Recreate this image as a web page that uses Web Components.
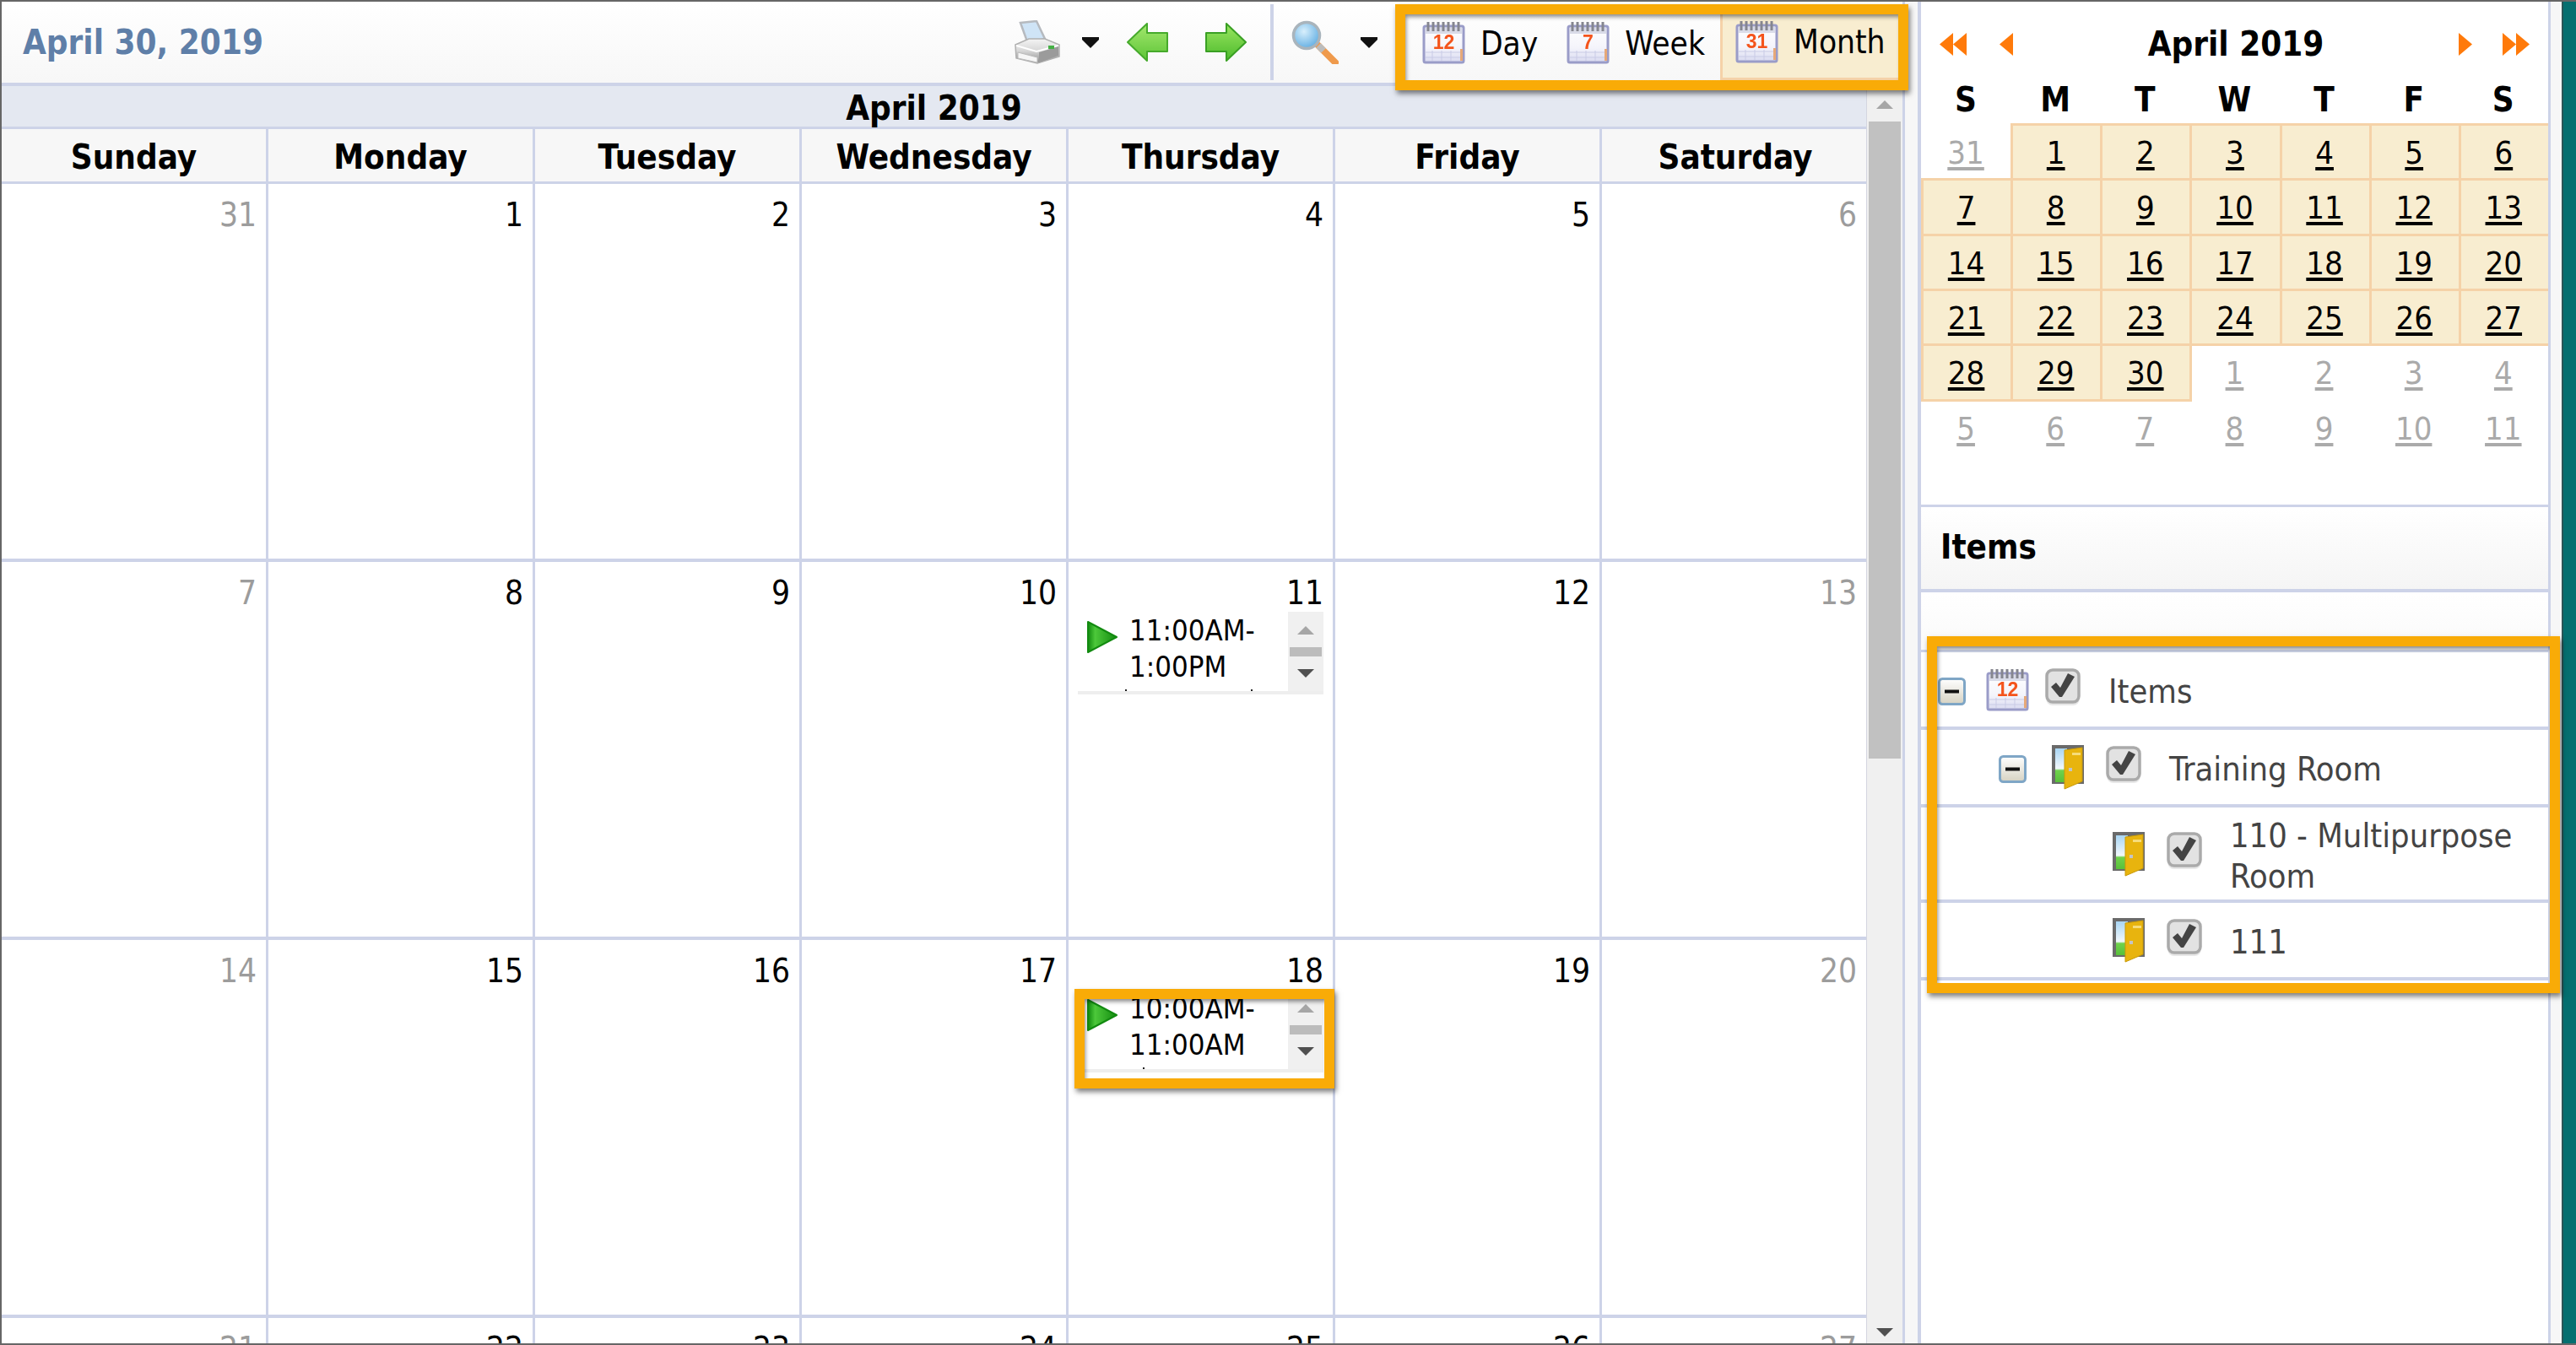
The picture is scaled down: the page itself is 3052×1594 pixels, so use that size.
<!DOCTYPE html>
<html>
<head>
<meta charset="utf-8">
<title>Calendar</title>
<style>
  html, body { margin: 0; padding: 0; background: #fff; overflow: hidden; }
  body { font-family: "DejaVu Sans Condensed", "DejaVu Sans", "Liberation Sans", sans-serif; font-stretch: condensed; font-size: 38px; }
</style>
</head>
<body>
<cal-app></cal-app>

<script>
  (function () {

    // small helper, every element is the same few lines otherwise
    function shadow(el, html) {
      const root = el.attachShadow({ mode: 'open' });
      root.innerHTML = html;
      return root;
    }

    const LINE = '#cdd3e8';

    const calendarIcon = (num) => `
      <svg width="53" height="52" viewBox="0 0 53 52">
        <defs><linearGradient id="pg" x1="0" y1="0" x2="0" y2="1"><stop offset="0" stop-color="#fff"/><stop offset=".6" stop-color="#f4f4fb"/><stop offset="1" stop-color="#d8daf0"/></linearGradient></defs>
        <rect x="3" y="7" width="47" height="43" rx="2" fill="url(#pg)" stroke="#9a9cc8" stroke-width="3"/>
        <rect x="5" y="9" width="43" height="7" fill="#d9dbe8"/>
        <path d="M8 2v11M14 2v11M20 2v11M26 2v11M32 2v11M38 2v11M44 2v11" stroke="#85868f" stroke-width="3"/>
        <path d="M5 38h43M5 44h43M13 36v12M24 36v12M35 36v12" stroke="#c9cbe6" stroke-width="1"/>
        <rect x="46" y="34" width="3" height="14" fill="#e6a878"/>
        <text x="26.5" y="34" text-anchor="middle" font-family="Liberation Sans, sans-serif" font-weight="700" font-size="23" fill="#f4541c">${num}</text>
      </svg>`;

    const ICONS = {
      printer: `<svg width="56" height="52" viewBox="0 0 56 52">
        <defs><linearGradient id="b" x1="0" y1="0" x2="0" y2="1"><stop offset="0" stop-color="#f4f4f4"/><stop offset=".5" stop-color="#d6d6d6"/><stop offset="1" stop-color="#8a8a8a"/></linearGradient></defs>
        <path d="M8 3l19-2 10 21-20 6z" fill="#cfe4f6" stroke="#b6babf" stroke-width="2.500"/>
        <path d="M2 29l16-7 19 0 17 7v14L28 51 3 45z" fill="url(#b)" stroke="#b0b0b0" stroke-width="1.500"/>
        <path d="M3 30l24 7 26-7" fill="none" stroke="#fff" stroke-width="2"/>
        <path d="M30 38l23-7v11l-23 8z" fill="#9b9b9b"/>
        <path d="M5 38l23 6v6L5 45z" fill="#f6f6f6" stroke="#bbb"/>
        <rect x="41" y="30" width="7" height="4" fill="#45b045"/>
      </svg>`,
      tri: `<svg width="20" height="13" viewBox="0 0 20 13"><path d="M0 0h20v3l-10 10L0 3z" fill="#111"/></svg>`,
      left: `<svg width="49" height="46" viewBox="0 0 49 46">
        <defs><linearGradient id="g" x1="0" y1="0" x2="0" y2="1"><stop offset="0" stop-color="#a4e86e"/><stop offset="1" stop-color="#5dc437"/></linearGradient></defs>
        <path d="M1 23L24 1v11h24v22H24v11z" fill="url(#g)" stroke="#46aa2c" stroke-width="2" stroke-linejoin="round"/>
      </svg>`,
      right: `<svg width="49" height="46" viewBox="0 0 49 46">
        <defs><linearGradient id="g" x1="0" y1="0" x2="0" y2="1"><stop offset="0" stop-color="#9ae660"/><stop offset="1" stop-color="#4cba2c"/></linearGradient></defs>
        <path d="M48 23L25 1v11H1v22h24v11z" fill="url(#g)" stroke="#3aa024" stroke-width="2" stroke-linejoin="round"/>
      </svg>`,
      search: `<svg width="60" height="52" viewBox="0 0 60 52">
        <defs><radialGradient id="l" cx=".4" cy=".35" r=".7"><stop offset="0" stop-color="#d8effc"/><stop offset="1" stop-color="#5eace2"/></radialGradient></defs>
        <path d="M32 30l20 20" stroke="#ef9a4c" stroke-width="8" stroke-linecap="round"/>
        <path d="M32 30l6 6" stroke="#bcbcbc" stroke-width="8"/>
        <circle cx="18" cy="18" r="15.500" fill="url(#l)" stroke="#a9b4bc" stroke-width="3.500"/>
      </svg>`,
      play: `<svg width="36" height="38" viewBox="0 0 36 38">
        <defs><linearGradient id="p" x1="0" y1="0" x2="1" y2="0"><stop offset="0" stop-color="#108a0e"/><stop offset=".25" stop-color="#4cc83a"/><stop offset="1" stop-color="#148c10"/></linearGradient></defs>
        <path d="M1 1l34 18L1 37z" fill="url(#p)" stroke="#128a10" stroke-width="2" stroke-linejoin="round"/>
      </svg>`,
      door: `<svg width="38" height="54" viewBox="0 0 38 54">
        <defs><linearGradient id="s" x1="0" y1="0" x2="0" y2="1"><stop offset="0" stop-color="#a9d6f4"/><stop offset=".6" stop-color="#f2f8fc"/><stop offset=".65" stop-color="#6fd24c"/><stop offset="1" stop-color="#58c03a"/></linearGradient></defs>
        <rect x="0" y="1" width="38" height="46" fill="#6a6a6a"/>
        <rect x="4" y="5" width="14" height="40" fill="url(#s)"/>
        <path d="M15 7l21-3v40l-21 9z" fill="#e8b40e" stroke="#c99a08" stroke-width="1"/>
        <rect x="24" y="10" width="10" height="3" fill="#f6dc7a"/>
        <rect x="20" y="28" width="4" height="4" fill="#c4c4c4"/>
      </svg>`,
      check: `<svg width="42" height="45" viewBox="0 0 42 45">
        <rect x="1" y="4" width="40" height="40" rx="8" fill="#e8e8e8"/>
        <rect x="2" y="2" width="38" height="38" rx="7" fill="#e2e2e2" stroke="#aaa" stroke-width="3.500"/>
        <path d="M7 22l6-5 5 6 9-17 8 4-15 24h-3z" fill="#444"/>
      </svg>`,
      minus: `<svg width="33" height="33" viewBox="0 0 33 33">
        <defs><linearGradient id="m" x1="0" y1="0" x2="0" y2="1"><stop offset="0" stop-color="#fff"/><stop offset="1" stop-color="#d6d2c2"/></linearGradient></defs>
        <rect x="1.500" y="1.500" width="30" height="30" rx="4" fill="url(#m)" stroke="#7fa6c6" stroke-width="3"/>
        <rect x="8" y="14.500" width="17" height="4" fill="#111"/>
      </svg>`,
      rewind: `<svg width="32" height="27" viewBox="0 0 32 27"><path d="M16 0v27L0 13.500zM32 0v27L16 13.500z" fill="#ff7a0a"/></svg>`,
      forward: `<svg width="32" height="27" viewBox="0 0 32 27"><path d="M0 0v27l16-13.500zM16 0v27l16-13.500z" fill="#ff7a0a"/></svg>`,
      prev: `<svg width="16" height="27" viewBox="0 0 16 27"><path d="M16 0v27L0 13.500z" fill="#ff7a0a"/></svg>`,
      next: `<svg width="16" height="27" viewBox="0 0 16 27"><path d="M0 0v27l16-13.500z" fill="#ff7a0a"/></svg>`
    };

    class UiIcon extends HTMLElement {
      connectedCallback() {
        const name = this.getAttribute('name');
        const num = this.getAttribute('num');
        const soft = this.hasAttribute('soft');
        shadow(this, `<style>
          :host { display: inline-flex; flex: none; }
          svg { display: block; ${soft ? 'filter: blur(.7px);' : ''} }
        </style>${num ? calendarIcon(num) : ICONS[name]}`);
      }
    }

    // the orange annotation frame laid over the screenshot
    class HiBox extends HTMLElement {
      connectedCallback() {
        const a = (n) => this.getAttribute(n) + 'px';
        shadow(this, `<style>
          :host { position: absolute; left: ${a('x')}; top: ${a('y')}; width: ${a('w')}; height: ${a('h')}; box-sizing: border-box;
            border: 12px solid #f9ab07; z-index: 10; pointer-events: none;
            box-shadow: 2px 4px 6px rgba(0,0,0,.5), inset 2px 4px 5px -1px rgba(0,0,0,.45); }
        </style>`);
      }
    }

    class ToolBtn extends HTMLElement {
      connectedCallback() {
        shadow(this, `<style>
          :host { display: flex; align-items: center; flex: none; box-sizing: border-box; align-self: stretch; }
          :host([active]) { background: #f8edd0; border-left: 3px solid #f5d2a8; border-bottom: 3px solid #f5d2a8; }
          .txt { margin-left: 17px; padding-top: 2px; color: #000; font-size: 38.500px; }
        </style><ui-icon soft num="${this.getAttribute('num')}"></ui-icon><span class="txt"><slot></slot></span>`);
      }
    }

    class CalToolbar extends HTMLElement {
      connectedCallback() {
        shadow(this, `<style>
          :host { display: flex; align-items: center; box-sizing: border-box; height: 100px; padding: 3px 5px 3px 25px;
            border-bottom: 4px solid ${LINE}; background: linear-gradient(#fff, #f7f7f7); }
          .title { flex: 1; font-weight: 700; font-size: 40px; color: #5f7fa8; text-shadow: 0 2px 0 #fff; }
          .sep { width: 4px; align-self: stretch; background: ${LINE}; margin: 0 21px 0 28px; flex: none; }
        </style>
        <div class="title">April 30, 2019</div>
        <ui-icon soft name="printer" style="margin-right:25px"></ui-icon>
        <ui-icon name="tri" style="margin-right:33px"></ui-icon>
        <ui-icon soft name="left" style="margin-right:44px"></ui-icon>
        <ui-icon soft name="right"></ui-icon>
        <div class="sep"></div>
        <ui-icon soft name="search" style="margin-right:22px"></ui-icon>
        <ui-icon name="tri" style="margin-right:52px"></ui-icon>
        <tool-btn num="12">Day</tool-btn>
        <tool-btn num="7" style="margin-left:33px">Week</tool-btn>
        <tool-btn num="31" active style="margin-left:18px;width:211px;padding-left:14px">Month</tool-btn>`);
      }
    }

    class VScroll extends HTMLElement {
      connectedCallback() {
        shadow(this, `<style>
          :host { display: flex; flex-direction: column; align-items: center; position: relative; box-sizing: border-box; flex: none;
            width: 43px; background: #f0f0f0; border-left: 1px solid #d4d6e0; }
          .up, .down { width: 0; height: 0; border-left: 10px solid transparent; border-right: 10px solid transparent; flex: none; }
          .up { border-bottom: 10px solid #a6a6a6; margin-top: 17px; }
          .thumb { width: 38px; height: 755px; background: #c1c1c1; margin-top: 15px; flex: none; }
          .down { border-top: 10px solid #505050; margin-top: auto; margin-bottom: 8px; }
        </style><div class="up"></div><div class="thumb"></div><div class="down"></div>`);
      }
    }

    class CalEvent extends HTMLElement {
      connectedCallback() {
        const dots = (this.getAttribute('dots') || '').split(',').filter(Boolean)
          .map((x) => `<i style="left:${x}px"></i>`).join('');
        shadow(this, `<style>
          :host { display: block; position: relative; box-sizing: border-box; margin-left: 11px; width: 291px; height: 98px;
            background: #fff; border-bottom: 4px solid #eee; }
          .wrap { display: flex; height: 94px; }
          .body { flex: 1; display: flex; overflow: hidden; position: relative; }
          .body ui-icon { margin: 11px 14px 0 11px; }
          .txt { font-size: 34.500px; line-height: 43px; padding-top: 1px; color: #000; white-space: nowrap; }
          i { position: absolute; bottom: 0; width: 2px; height: 2px; background: #222; }
          .bar { width: 42px; background: #f0f0f0; display: flex; flex-direction: column; align-items: center; flex: none; }
          .up, .down { width: 0; height: 0; border-left: 10px solid transparent; border-right: 10px solid transparent; }
          .up { border-bottom: 10px solid #a6a6a6; margin-top: 17px; }
          .thumb { width: 38px; height: 11px; background: #bcbcbc; margin-top: 15px; }
          .down { border-top: 10px solid #505050; margin-top: 15px; }
        </style>
        <div class="wrap">
          <div class="body"><ui-icon soft name="play"></ui-icon><div class="txt"><slot></slot></div>${dots}</div>
          <div class="bar"><div class="up"></div><div class="thumb"></div><div class="down"></div></div>
        </div>`);
      }
    }

    class DayCell extends HTMLElement {
      connectedCallback() {
        shadow(this, `<style>
          :host { display: block; box-sizing: border-box; border-right: 3px solid ${LINE}; border-bottom: 4px solid ${LINE}; height: 448px; position: relative; }
          :host(:nth-child(7n)) { border-right: 0; }
          :host(:nth-child(7n)) .n { padding-right: 14px; }
          :host([muted]) .n { color: #9c9c9c; }
          .n { height: 59px; box-sizing: border-box; padding: 15px 11px 0 0; text-align: right; font-size: 38.500px; line-height: 44px; color: #000; }
        </style><div class="n">${this.getAttribute('n')}</div><slot></slot>`);
      }
    }

    class MonthGrid extends HTMLElement {
      connectedCallback() {
        const names = ['Sunday', 'Monday', 'Tuesday', 'Wednesday', 'Thursday', 'Friday', 'Saturday'];
        shadow(this, `<style>
          :host { display: block; flex: 1; min-width: 0; overflow: hidden; }
          .cap { height: 51px; box-sizing: border-box; background: #e4e8f1; border-bottom: 3px solid ${LINE}; text-align: center;
            font-weight: 700; font-size: 40px; line-height: 53px; color: #000; }
          .head { display: grid; grid-template-columns: repeat(7, 316px); height: 65px; box-sizing: border-box; background: #f7f7f7; border-bottom: 3px solid ${LINE}; }
          .head div { border-right: 3px solid ${LINE}; text-align: center; font-weight: 700; font-size: 40px; line-height: 67px; color: #000; }
          .head div:last-child { border-right: 0; }
          .days { display: grid; grid-template-columns: repeat(7, 316px); }
        </style>
        <div class="cap">April 2019</div>
        <div class="head">${names.map((n) => `<div>${n}</div>`).join('')}</div>
        <div class="days"><slot></slot></div>`);
      }
    }

    class MiniCal extends HTMLElement {
      connectedCallback() {
        const wk = ['S', 'M', 'T', 'W', 'T', 'F', 'S'];
        let cells = '';
        [31].forEach((d) => { cells += `<div class="c"><a class="o">${d}</a></div>`; });
        for (let d = 1; d <= 30; d++) cells += `<div class="c in"><a>${d}</a></div>`;
        for (let d = 1; d <= 11; d++) cells += `<div class="c"><a class="o">${d}</a></div>`;
        shadow(this, `<style>
          :host { display: block; height: 599px; box-sizing: border-box; border-bottom: 3px solid ${LINE}; background: #fff; color: #000; }
          .nav { display: flex; align-items: center; height: 100px; padding: 0 22px; box-sizing: border-box; }
          .nav b { flex: 1; text-align: center; font-size: 40px; }
          .wk, .grid { display: grid; grid-template-columns: repeat(7, 106.140px); }
          .wk { height: 44px; }
          .wk div { text-align: center; font-weight: 700; font-size: 40px; line-height: 32px; }
          .grid { grid-auto-rows: 65.330px; }
          .c { text-align: center; font-size: 38px; line-height: 70px; box-sizing: border-box; }
          .c.in { background: #f8edd0; border: 3px solid #f5d2a8; margin: 0 -3px -3px 0; padding-right: 2px; line-height: 64px; }
          a { color: #000; text-decoration: underline; text-decoration-thickness: 4px; text-underline-offset: 4px; }
          a.o { color: #aaa; }
        </style>
        <div class="nav">
          <ui-icon name="rewind" style="margin-right:39px"></ui-icon>
          <ui-icon name="prev"></ui-icon>
          <b>April 2019</b>
          <ui-icon name="next" style="margin-right:36px"></ui-icon>
          <ui-icon name="forward"></ui-icon>
        </div>
        <div class="wk">${wk.map((w) => `<div>${w}</div>`).join('')}</div>
        <div class="grid">${cells}</div>`);
      }
    }

    class TreeRow extends HTMLElement {
      connectedCallback() {
        const level = +this.getAttribute('level') || 0;
        const twist = this.hasAttribute('open') ? '<ui-icon soft name="minus" style="margin-top:5px"></ui-icon>' : '';
        const icon = this.getAttribute('icon') === 'door'
          ? '<ui-icon soft name="door"></ui-icon>'
          : '<ui-icon soft num="12"></ui-icon>';
        shadow(this, `<style>
          :host { display: flex; align-items: center; box-sizing: border-box; height: ${this.getAttribute('h') || 92}px;
            border-bottom: 4px solid ${LINE}; padding-left: ${20 + level * 72}px; color: #444; background: #fff; }
          .tw { width: 33px; margin-right: 23px; flex: none; display: flex; }
          .ic { width: 52px; margin-right: 19px; flex: none; display: flex; justify-content: center; }
          .ck { margin-right: 33px; margin-top: -6px; flex: none; display: flex; }
          .t { font-size: 39.500px; line-height: 48px; padding-top: 4px; }
        </style>
        <div class="tw">${twist}</div><div class="ic">${icon}</div>
        <div class="ck"><ui-icon soft name="check"></ui-icon></div>
        <div class="t"><slot></slot></div>`);
      }
    }

    class SidePanel extends HTMLElement {
      connectedCallback() {
        shadow(this, `<style>
          :host { display: block; flex: none; width: 750px; box-sizing: border-box; border-left: 4px solid ${LINE}; border-right: 3px solid ${LINE}; background: #fff; overflow: hidden; }
          .hd { height: 101px; box-sizing: border-box; padding-left: 23px; border-bottom: 4px solid ${LINE}; background: linear-gradient(#fff, #f5f5f5);
            font-weight: 700; font-size: 40px; line-height: 94px; color: #000; }
          .gap { height: 68px; background: linear-gradient(#fff, #fafafa); border-bottom: 3px solid ${LINE}; }
        </style>
        <mini-cal></mini-cal>
        <div class="hd">Items</div>
        <div class="gap"></div>
        <tree-row open icon="cal" level="0">Items</tree-row>
        <tree-row open icon="door" level="1">Training Room</tree-row>
        <tree-row icon="door" level="2" h="113">110 - Multipurpose Room</tree-row>
        <tree-row icon="door" level="2">111</tree-row>`);
      }
    }

    class CalApp extends HTMLElement {
      connectedCallback() {
        const today = { 11: ['11:00AM-', '1:00PM', '56,205'], 18: ['10:00AM-', '11:00AM', '77'] };
        const labels = [31, 1, 2, 3, 4, 5, 6, 7, 8, 9, 10, 11, 12, 13, 14, 15, 16, 17, 18, 19, 20, 21, 22, 23, 24, 25, 26, 27];
        const days = labels.map((d, i) => {
          const muted = i % 7 === 0 || i % 7 === 6;
          const ev = today[d] && i > 0
            ? `<cal-event dots="${today[d][2]}">${today[d][0]}<br>${today[d][1]}</cal-event>` : '';
          return `<day-cell n="${d}"${muted ? ' muted' : ''}>${ev}</day-cell>`;
        }).join('');
        shadow(this, `<style>
          :host { display: block; position: relative; width: 3052px; height: 1594px; box-sizing: border-box; overflow: hidden;
            border-top: 2px solid #666; border-bottom: 2px solid #666; background: #f7f7f7; }
          .page { display: flex; height: 100%; }
          .main { flex: none; width: 2257px; box-sizing: border-box; border-left: 2px solid #666; border-right: 3px solid ${LINE};
            display: flex; flex-direction: column; background: #fff; }
          .view { flex: 1; display: flex; min-height: 0; }
          .gut { width: 15px; flex: none; }
          .gut2 { width: 13px; flex: none; }
          .teal { flex: 1; background: #056f70; border-left: 2px solid #2a5557; }
        </style>
        <div class="page">
          <div class="main">
            <cal-toolbar></cal-toolbar>
            <div class="view"><month-grid>${days}</month-grid><v-scroll></v-scroll></div>
          </div>
          <div class="gut"></div>
          <side-panel></side-panel>
          <div class="gut2"></div>
          <div class="teal"></div>
        </div>
        <hi-box x="1653" y="3" w="608" h="102"></hi-box>
        <hi-box x="1273" y="1170" w="308" h="118"></hi-box>
        <hi-box x="2283" y="752" w="750" h="423"></hi-box>`);
      }
    }

    customElements.define('ui-icon', UiIcon);
    customElements.define('hi-box', HiBox);
    customElements.define('tool-btn', ToolBtn);
    customElements.define('cal-toolbar', CalToolbar);
    customElements.define('v-scroll', VScroll);
    customElements.define('cal-event', CalEvent);
    customElements.define('day-cell', DayCell);
    customElements.define('month-grid', MonthGrid);
    customElements.define('mini-cal', MiniCal);
    customElements.define('tree-row', TreeRow);
    customElements.define('side-panel', SidePanel);
    customElements.define('cal-app', CalApp);

  })();
</script>
</body>
</html>
